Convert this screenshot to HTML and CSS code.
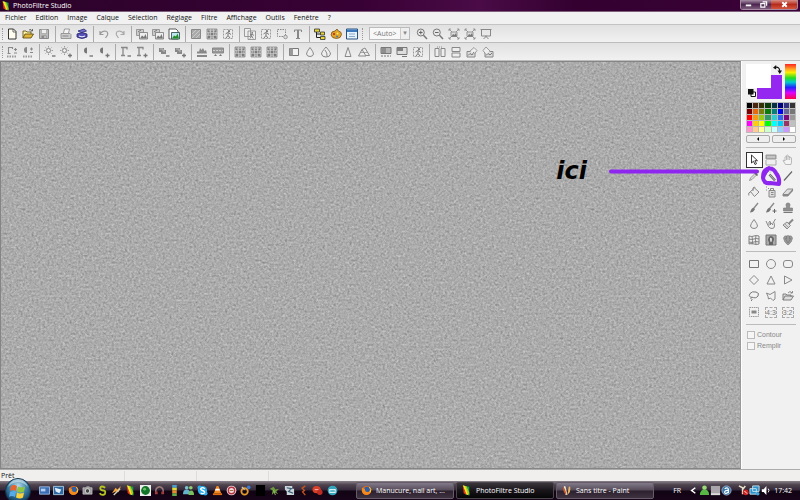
FILE: index.html
```html
<!DOCTYPE html>
<html lang="fr">
<head>
  <meta charset="UTF-8">
  <meta name="viewport" content="width=device-width, initial-scale=1.0">
  <title>PhotoFiltre Studio</title>
  <link rel="stylesheet" href="styles.css">
</head>
<body>

<!-- Icon set -->
<svg class="sprite" aria-hidden="true">
  <defs>
    <radialGradient id="orb" cx=".5" cy=".3" r=".7">
      <stop offset="0" stop-color="#b9dcec"/><stop offset=".5" stop-color="#3d83a9"/><stop offset="1" stop-color="#0a2e4c"/>
    </radialGradient>
    <filter id="grain" x="0" y="0" width="100%" height="100%" color-interpolation-filters="sRGB">
      <feTurbulence type="fractalNoise" baseFrequency=".45" numOctaves="2" seed="4"/>
      <feColorMatrix type="matrix" values=".16 .16 .16 0 .43  .16 .16 .16 0 .43  .16 .16 .16 0 .43  0 0 0 0 1"/>
    </filter>
  </defs>
  <symbol id="new" viewBox="0 0 12 12"><path d="M2.5 1h5l2.500 2.500V11h-7.500z" fill="#fffdf0" stroke="#333"/><path d="M7 1v3h3" fill="none" stroke="#333" stroke-width=".7"/></symbol>
  <symbol id="open" viewBox="0 0 12 12"><path d="M1 10V3h3l1 1h4v2" fill="#fff3a0" stroke="#54430a" stroke-width=".8"/><path d="M1 10l2-4h8.500L9 10z" fill="#e0b63a" stroke="#54430a" stroke-width=".8"/><path d="M7 2q2-1.500 3 .8M10.500 1v2h-2" fill="none" stroke="#333" stroke-width=".7"/></symbol>
  <symbol id="save" viewBox="0 0 12 12"><path d="M1.500 1.500h9v9h-9z" fill="#bbb" stroke="#888"/><path d="M3.500 1.500h5v4h-5z" fill="#eee" stroke="#999" stroke-width=".6"/><path d="M3.500 7.500h5v3h-5z" fill="#888"/><path d="M6.500 8h1v2h-1z" fill="#eee"/></symbol>
  <symbol id="print" viewBox="0 0 12 12"><path d="M3.500 5l1-4h5l-1 4" fill="#f4f4f4" stroke="#888" stroke-width=".8"/><path d="M1 5.500h9l1 1v4H1z" fill="#ccc" stroke="#888" stroke-width=".8"/><path d="M2.500 8h6" stroke="#888"/></symbol>
  <symbol id="scan" viewBox="0 0 12 12"><path d="M2 3l6-2 2.500 2-5 1.500z" fill="#7773cc" stroke="#262678" stroke-width=".8"/><path d="M1 6q5-3 10 0v3q-5 3-10 0z" fill="#5551b6" stroke="#24246c" stroke-width=".8"/><path d="M3 8q3 1.500 6 0" fill="none" stroke="#eef" stroke-width="1.200"/></symbol>
  <symbol id="undo" viewBox="0 0 12 12"><path d="M2 3v3.500h3.500M2 6q2-3 5-3 3.500.5 2.500 4L7.500 10" fill="none" stroke="#999" stroke-width="1.200"/></symbol>
  <symbol id="redo" viewBox="0 0 12 12"><path d="M10 3v3.500H6.500M10 6Q8 3 5 3 1.500 3.500 2.500 7L4.500 10" fill="none" stroke="#aaa" stroke-width="1.200"/></symbol>
  <symbol id="pics" viewBox="0 0 12 12"><path d="M.5 1.500h7v6h-7z" fill="#ccc" stroke="#888" stroke-width=".8"/><path d="M3.500 4.500h8v6.500h-8z" fill="#eee" stroke="#777" stroke-width=".8"/><path d="M4 10.500l2-3 2 1.500 1.500-3 1.500 4.500z" fill="#777"/><path d="M2 4l3-2" stroke="#777"/></symbol>
  <symbol id="picgreen" viewBox="0 0 12 12"><path d="M1 1h7l2 2v8H1z" fill="#fff" stroke="#333" stroke-width=".8"/><path d="M3.500 4.500h8v6.500h-8z" fill="#bfe6ee" stroke="#244" stroke-width=".8"/><path d="M4 10.500l2-3 2 1 1.500-3 1.500 5z" fill="#248a24"/></symbol>
  <symbol id="pattern" viewBox="0 0 12 12"><path d="M1.500 1.500h9v9h-9z" fill="#aaa" stroke="#888"/><path d="M2 10L10 2M2 6l4-4M6 10l4-4" stroke="#c8c8c8"/></symbol>
  <symbol id="grid" viewBox="0 0 12 12"><path d="M1 1h10v10H1z" fill="#b0b0b0" stroke="#888" stroke-width=".8"/><path d="M2 2l2.500 2.500L6 2.500l1.500 2L10 2v3L8 6l2 2v2H8L6 7.500 4 10H2V7.500L4 6 2 4z" fill="#7c7c7c"/><path d="M4.500 1v10M7.500 1v10M1 4.500h10M1 7.500h10" stroke="#d5d5d5" stroke-width=".6"/></symbol>
  <symbol id="runner" viewBox="0 0 12 12"><path d="M1.500 1.500h9v9h-9z" fill="#ededed" stroke="#888" stroke-width=".8" stroke-dasharray="2 1"/><circle cx="7" cy="3.200" r="1.100" fill="#777"/><path d="M3.500 6l2-1.500 1.500.5 2 1.500M6 5v2.500L4 10M6 7.500L8 10" fill="none" stroke="#777"/></symbol>
  <symbol id="copyrun" viewBox="0 0 12 12"><path d="M.5.500h6v8h-6zM4 3h7.500v8.500H4z" fill="#eee" stroke="#888" stroke-width=".8"/><circle cx="8.200" cy="4.800" r=".9" fill="#777"/><path d="M6 7l2-1 2 1.500M7.700 6v2L6 10.500M7.700 8l1.500 2.500" fill="none" stroke="#777" stroke-width=".9"/></symbol>
  <symbol id="select" viewBox="0 0 12 12"><path d="M1.500 1.500h8v7h-8z" fill="none" stroke="#888" stroke-dasharray="1.500 1"/><circle cx="9.500" cy="9" r="1.800" fill="#ddd" stroke="#888" stroke-width=".8"/></symbol>
  <symbol id="type" viewBox="0 0 12 12"><path d="M2.500 4V2h7v2M4 10.500h4" fill="none" stroke="#888"/><path d="M6 2v8" stroke="#888" stroke-width="2"/></symbol>
  <symbol id="tree" viewBox="0 0 12 12"><path d="M2.500 3v6.500H7M2.500 6H7" fill="none" stroke="#222"/><path d="M.5 1h5v3h-5zM6.500 4h4v3h-4zM6.500 8.500h4.500v3H6.500z" fill="#e7d62e" stroke="#333" stroke-width=".8"/></symbol>
  <symbol id="palette" viewBox="0 0 12 12"><path d="M1 7q0-4 4-4l2-2 1.500 2q3 .5 3 3.500-.5 4-5 4-4.500 0-5.500-3.500z" fill="#e0a22c" stroke="#6d470b" stroke-width=".7"/><circle cx="4" cy="6" r="1" fill="#b22"/><circle cx="7.500" cy="5.500" r="1" fill="#fe5"/><circle cx="7" cy="8.500" r=".9" fill="#47a"/></symbol>
  <symbol id="window" viewBox="0 0 12 12"><path d="M.5 1h11v10H.5z" fill="#e8f2fb" stroke="#285080"/><path d="M1 1.500h10v2.500H1z" fill="#3b78bd"/><path d="M3 6h6M3 8.500h6" stroke="#86aacb"/></symbol>
  <symbol id="zoomin" viewBox="0 0 12 12"><circle cx="4.800" cy="4.500" r="3.500" fill="none" stroke="#777"/><path d="M7.500 7.300l3.500 3.700" stroke="#777" stroke-width="1.500"/><path d="M3 4.500h3.600M4.800 2.700v3.600" stroke="#666"/></symbol>
  <symbol id="zoomout" viewBox="0 0 12 12"><circle cx="4.800" cy="4.500" r="3.500" fill="none" stroke="#777"/><path d="M7.500 7.300l3.500 3.700" stroke="#777" stroke-width="1.500"/><path d="M3 4.500h3.600" stroke="#666"/></symbol>
  <symbol id="fit" viewBox="0 0 12 12"><path d="M3 4h6v4.500H3z" fill="#ddd" stroke="#999"/><path d="M3.500 8.500L5 6l1.500 1L8 5l1 3.500z" fill="#777"/><path d="M1 1l3 3M11 1L8 4M1 11l3-3M11 11L8 8M1 3V1h2M11 3V1H9M1 9v2h2M11 9v2H9" fill="none" stroke="#888" stroke-width=".8"/></symbol>
  <symbol id="screen" viewBox="0 0 12 12"><path d="M.5 1.500h11M1.500 2v6h9V2M6 7.500V9M3.500 11L6 8.500 8.500 11" fill="none" stroke="#888"/></symbol>
  <symbol id="autolevel" viewBox="0 0 12 12"><path d="M2.500 7.500V1.500h4v1.500M1.500 7.500h3M8 3.500h3M9.500 2v3M8 7h3" fill="none" stroke="#888" stroke-width="1.100"/><path d="M1 10.500h10" stroke="#999" stroke-width="2" stroke-dasharray="1.500 1"/></symbol>
  <symbol id="autocontrast" viewBox="0 0 12 12"><path d="M5 1v6a3 3 0 010-6z" fill="#888"/><path d="M8 3h3M9.500 1.500v3M8 6.500h3" fill="none" stroke="#888"/><path d="M1 10.500h10" stroke="#999" stroke-width="2" stroke-dasharray="1.500 1"/></symbol>
  <symbol id="sun" viewBox="0 0 12 12"><circle cx="4.500" cy="4.500" r="2" fill="#eee" stroke="#888"/><path d="M4.500 0v1.500M4.500 7.500V9M0 4.500h1.500M7.500 4.500H9M1.500 1.500l1 1M6.500 6.500l1 1M7.500 1.500l-1 1M1.500 7.500l1-1" stroke="#888" stroke-width=".8"/></symbol>
  <symbol id="sunless" viewBox="0 0 12 12"><use href="#sun" width="12" height="12"/><path d="M8 10h3.500" stroke="#777" stroke-width="1.400"/></symbol>
  <symbol id="sunmore" viewBox="0 0 12 12"><use href="#sun" width="12" height="12"/><path d="M8 9.500h4M10 7.500v4" stroke="#777" stroke-width="1.300"/></symbol>
  <symbol id="conless" viewBox="0 0 12 12"><path d="M5 1.500v6a3 3 0 010-6z" fill="#777"/><path d="M7.500 10H11" stroke="#777" stroke-width="1.400"/></symbol>
  <symbol id="conmore" viewBox="0 0 12 12"><path d="M5 1.500v6a3 3 0 010-6z" fill="#777"/><path d="M7.500 9.500h4M9.500 7.500v4" stroke="#777" stroke-width="1.300"/></symbol>
  <symbol id="gamless" viewBox="0 0 12 12"><path d="M1 9.500h4M3 9.500V2M1 1.500h6v2" fill="none" stroke="#888" stroke-width="1.300"/><path d="M7.500 10H11" stroke="#777" stroke-width="1.400"/></symbol>
  <symbol id="gammore" viewBox="0 0 12 12"><path d="M1 9.500h4M3 9.500V2M1 1.500h6v2" fill="none" stroke="#888" stroke-width="1.300"/><path d="M7.500 9.500h4M9.500 7.500v4" stroke="#777" stroke-width="1.300"/></symbol>
  <symbol id="satless" viewBox="0 0 12 12"><path d="M1 2h5v2h2v4H3V6H1z" fill="#888"/><path d="M2 3h3v2h2" stroke="#bbb" fill="none"/><path d="M8 10h3.500" stroke="#777" stroke-width="1.400"/></symbol>
  <symbol id="satmore" viewBox="0 0 12 12"><path d="M1 2h5v2h2v4H3V6H1z" fill="#888"/><path d="M2 3h3v2h2" stroke="#bbb" fill="none"/><path d="M8 9.500h4M10 7.500v4" stroke="#777" stroke-width="1.300"/></symbol>
  <symbol id="histo" viewBox="0 0 12 12"><path d="M1 7.500V6l1-1 1 1 1-4 1.500 2L7 2l1.500 3L10 4l1 3.500z" fill="#888"/><path d="M1 10h10" stroke="#888" stroke-width="2"/></symbol>
  <symbol id="levels" viewBox="0 0 12 12"><path d="M.5 2h11v5H.5z" fill="#999" stroke="#888"/><path d="M1 4.500h10" stroke="#ccc" stroke-dasharray="2 1"/><path d="M2 10l1.500-2L5 10zM7 10l1.500-2 1.500 2z" fill="#777"/></symbol>
  <symbol id="contrast" viewBox="0 0 12 12"><path d="M1.500 2.500h9v7h-9z" fill="#f2f2f2" stroke="#777"/><path d="M1.500 2.500H5v7H1.500z" fill="#999"/></symbol>
  <symbol id="drop" viewBox="0 0 12 12"><path d="M6 1.500Q2.500 6 2.500 8q.5 2.500 3.500 2.500T9.500 8Q9.500 6 6 1.500z" fill="#eee" stroke="#888"/></symbol>
  <symbol id="drops" viewBox="0 0 12 12"><path d="M6 1Q1.500 6 1.500 8q.5 3 4.500 3t4.500-3Q10.500 6 6 1z" fill="#eee" stroke="#888"/><path d="M5 4Q7.500 7 7 10.500" fill="none" stroke="#888"/></symbol>
  <symbol id="cone" viewBox="0 0 12 12"><path d="M6 1.500L3 10.500h6z" fill="#eee" stroke="#888"/></symbol>
  <symbol id="hills" viewBox="0 0 12 12"><path d="M.5 10L4 3.500 8 10zM4 3.500L7 2l4.500 7.500H8" fill="#eee" stroke="#888"/><path d="M2.500 6.500h7" stroke="#888" stroke-width=".7"/></symbol>
  <symbol id="grad" viewBox="0 0 12 12"><path d="M1 1.500h10v6H1z" fill="#b5b5b5" stroke="#777"/><path d="M1 2h5v5H1z" fill="#8e8e8e"/><path d="M1 10h10" stroke="#777" stroke-dasharray="2 1"/></symbol>
  <symbol id="gradtwo" viewBox="0 0 12 12"><path d="M1 1.500h10v7H1z" fill="#ddd" stroke="#777"/><path d="M1 2h6v3H1z" fill="#808080"/><path d="M6 10.500h5" stroke="#777"/></symbol>
  <symbol id="mirror" viewBox="0 0 12 12"><path d="M1 2.500h4v8H1zM7 2.500h4v8H7z" fill="#eee" stroke="#888"/><path d="M3 1h6" stroke="#888" stroke-dasharray="1 1"/></symbol>
  <symbol id="flip" viewBox="0 0 12 12"><path d="M2 1.500h8v4H2zM2 7h8v4H2z" fill="#eee" stroke="#888"/></symbol>
  <symbol id="rotate" viewBox="0 0 12 12"><path d="M1 5.500h8v5.500H1z" fill="#ddd" stroke="#888"/><path d="M4 5L8 1.500l3 3-3 4" fill="#eee" stroke="#888" stroke-width=".8"/><path d="M2 9.500l2-2 2 1.500 2-3" fill="none" stroke="#777"/></symbol>
  <symbol id="rotateright" viewBox="0 0 12 12"><path d="M3 5.500h8v5.500H3z" fill="#ddd" stroke="#888"/><path d="M8 5L4 1l-3 3.500 3 4" fill="#eee" stroke="#888" stroke-width=".8"/><path d="M4 9.500l2-2 2 1.500 2-2" fill="none" stroke="#777"/></symbol>

  <symbol id="arrow" viewBox="0 0 12 12"><path d="M3.500 1v8l2-1.800L7 10.500l1.500-.8-1.600-3H9.500z" fill="#fff" stroke="#222" stroke-width=".9"/></symbol>
  <symbol id="layers" viewBox="0 0 12 12"><path d="M1 1h10v4H1z" fill="#a9a9a9" stroke="#999"/><path d="M2 3h8" stroke="#ddd"/><path d="M1 6v5h10V6" fill="#eee" stroke="#aaa"/></symbol>
  <symbol id="hand" viewBox="0 0 12 12"><path d="M3.500 10.500L1 6.500q1-1 2 .5V3q1-1 1.500 0V1.500q1-1 1.500 0v1q1-1 1.500 0v1q1.500-.8 2 .5v4L9 10.500zM4.500 3v3M6 2v4M7.700 3v3" fill="#f4f4f4" stroke="#aaa" stroke-width=".8"/></symbol>
  <symbol id="pipette" viewBox="0 0 12 12"><path d="M1.500 10.500l1-2.500L7 3.500 8.500 5 4 9.500z" fill="#ddd" stroke="#888" stroke-width=".8"/><path d="M6.500 2.500l3 3M8 3.500L10.500 1" stroke="#666" stroke-width="1.700"/></symbol>
  <symbol id="wand" viewBox="0 0 12 12"><path d="M4.500 4.500l5.500 6" stroke="#666" stroke-width="2.500"/><path d="M5 5l5 5.500" stroke="#ddd" stroke-width=".7"/><path d="M3.500 0v2M0 4h2M1 1l1.500 1.500M6 1.500L5 2.500" stroke="#888" stroke-width=".8"/></symbol>
  <symbol id="line" viewBox="0 0 12 12"><path d="M2 10.500l8-9" stroke="#666" stroke-width="1.200"/></symbol>
  <symbol id="bucket" viewBox="0 0 12 12"><path d="M2.500 5.500l4-3.500L11 6l-4.500 4.500z" fill="#eee" stroke="#888"/><path d="M5 5V2q1-2 2.500 0M3 5.500L.8 7v2.500" fill="none" stroke="#888"/></symbol>
  <symbol id="spray" viewBox="0 0 12 12"><path d="M4 4.500h6V11H4z" fill="#ddd" stroke="#888"/><path d="M5.500 4V2.500h3V4M6 6.500h2.500M6 8.500h2.500" fill="none" stroke="#888"/><path d="M1 1h1M3 2.500h1M1 4h1" stroke="#888"/></symbol>
  <symbol id="eraser" viewBox="0 0 12 12"><path d="M1 8l4.500-5H11L7 8.500 6 10H1z" fill="#ddd" stroke="#777" stroke-width=".8"/><path d="M1 8h5L11 3v2L6 10H1z" fill="#888"/></symbol>
  <symbol id="brush" viewBox="0 0 12 12"><path d="M6 6l4-5" stroke="#888" stroke-width="1.300"/><path d="M2 10.500Q3 6.500 5.500 5.500L7 7q-1.500 3.500-5 3.500z" fill="#777"/></symbol>
  <symbol id="brushplus" viewBox="0 0 12 12"><path d="M5 6l4-5" stroke="#888" stroke-width="1.300"/><path d="M1 10.500q1-4 3.500-5L6 7q-1.500 3.500-5 3.500z" fill="#777"/><path d="M7.500 9h4M9.500 7v4" stroke="#666"/></symbol>
  <symbol id="stamp" viewBox="0 0 12 12"><path d="M4.500 5q-1.500-4 1.500-4t1.500 4v1h3v3h-9V6h3z" fill="#909090" stroke="#777" stroke-width=".6"/><path d="M1.500 10.500h9" stroke="#777"/></symbol>
  <symbol id="smudge" viewBox="0 0 12 12"><path d="M1 3l2.500 5.500q1 2 3.500 2T9.500 8L9 4.500M4 7.500V4q1-1.500 1.500 0v3M6 6q.5-2 1.500 0v1M8 5l2.500-4" fill="none" stroke="#888"/></symbol>
  <symbol id="artbrush" viewBox="0 0 12 12"><path d="M6.500 6l4.500-4.500" stroke="#888" stroke-width="2"/><path d="M1 7l4-3 3.500 3.500L5 11z" fill="#ddd" stroke="#777" stroke-width=".8"/><path d="M3 6l3.500 3.500M2 8l2.500 1.500" stroke="#888" stroke-width=".7"/></symbol>
  <symbol id="mesh" viewBox="0 0 12 12"><path d="M1 2q3 1 5 0t5 0v8q-3 1-5 0t-5 0zM1 5q3 1 5 0t5 0M1 8q3 1 5 0t5 0M4 2.500q1 4 0 8M8 1.500q-1 4 0 9" fill="#eee" stroke="#777" stroke-width=".9"/></symbol>
  <symbol id="portrait" viewBox="0 0 12 12"><path d="M1 1h10v10H1z" fill="#aaa" stroke="#777"/><path d="M4 11V8Q2 6 4 3q2-2 4 0t0 5v3z" fill="#666"/><path d="M5 4q2-1 2 1.500T6 8 5 6z" fill="#ddd"/></symbol>
  <symbol id="nozzle" viewBox="0 0 12 12"><path d="M1.500 4q1-3 3-2 1.500-1 3 0 2-1 3 2-.5 4.500-4.500 7-4-2.500-4.500-7z" fill="#999" stroke="#888" stroke-width=".7"/><path d="M3 4l3 5 3-5M4.500 2v3M7.500 2v3" fill="none" stroke="#777" stroke-width=".7"/></symbol>
  <symbol id="s-rect" viewBox="0 0 12 12"><path d="M1.500 2.500h9v7h-9z" fill="none" stroke="#777"/></symbol>
  <symbol id="s-circle" viewBox="0 0 12 12"><circle cx="6" cy="6" r="4.500" fill="none" stroke="#888"/></symbol>
  <symbol id="s-round" viewBox="0 0 12 12"><rect x="1.500" y="2.500" width="9" height="7" rx="2.500" fill="none" stroke="#888"/></symbol>
  <symbol id="s-diamond" viewBox="0 0 12 12"><path d="M6 1.500L10.500 6 6 10.500 1.500 6z" fill="none" stroke="#888"/></symbol>
  <symbol id="s-tri" viewBox="0 0 12 12"><path d="M6 2l4 8H2z" fill="none" stroke="#888"/></symbol>
  <symbol id="s-play" viewBox="0 0 12 12"><path d="M2.500 2L10 6l-7.500 4z" fill="none" stroke="#888"/></symbol>
  <symbol id="s-lasso" viewBox="0 0 12 12"><path d="M3 7.500Q0 6 2 3.500t6-1.500q4 1 2 4T3.500 7q-1.500 1.500 0 2t-.5 2" fill="none" stroke="#777"/></symbol>
  <symbol id="s-poly" viewBox="0 0 12 12"><path d="M1.500 3l3.500 1.500 5-3V9L8 10.500 5.500 8l-2 1L3 6.500z" fill="none" stroke="#888"/></symbol>
  <symbol id="s-open" viewBox="0 0 12 12"><path d="M1 10V4h3l1 1h4v2M1 10l2-4h8.500L9 10z" fill="#ddd" stroke="#777" stroke-width=".9"/><path d="M6 3q2-3 4 0M10.500 1v2h-2" fill="none" stroke="#777" stroke-width=".8"/></symbol>
  <symbol id="s-frame" viewBox="0 0 12 12"><path d="M1.500 1.500h9v9h-9z" fill="none" stroke="#999" stroke-dasharray="1.500 .7"/><path d="M3.500 4.500h5v3h-5z" fill="#888"/></symbol>
  <symbol id="bird" viewBox="0 0 12 12"><path d="M2 .5l7 1.500v9.500L5 10z" fill="#1e9d44"/><path d="M2 .5l4 .8 3 7v3z" fill="#9ad02c"/><path d="M2 .5l2.500.5L8 11l-3-1z" fill="#ffe12a"/><path d="M2 .5L6 10.300 3 9z" fill="#e8381c"/></symbol>
  <symbol id="fox" viewBox="0 0 12 12"><circle cx="6" cy="6" r="5" fill="#e76a14"/><circle cx="6.500" cy="5" r="3.200" fill="#2d5fa8"/><path d="M1 3l3 1 1 3 3 1 3-3q0 5-5 6Q0 10 1 3z" fill="#f28a1d"/><path d="M9 2q3 3 1 6" stroke="#ffd344" fill="none"/></symbol>
  <symbol id="paint" viewBox="0 0 12 12"><path d="M3 1.500q1-1 2 0L7 11H5z" fill="#eee2c8"/><path d="M2 2q3 2 4 9Q2 8 2 2z" fill="#cc5a2d"/><path d="M10 1.500Q11 8 7 10.500L8.500 2z" fill="#e9b565"/></symbol>
</svg>

<header class="titlebar">
  <svg class="icon"><use href="#bird"/></svg>
  <span class="caption">PhotoFiltre Studio</span>
  <div class="window-buttons">
    <button aria-label="Réduire"><svg viewBox="0 0 10 10"><path d="M2 5h6v2H2z" fill="#fff"/></svg></button>
    <button aria-label="Restaurer"><svg viewBox="0 0 10 10"><path d="M4 2h4.500v4.500M2 4h4.500v4H2z" fill="none" stroke="#fff" stroke-width="1.300"/></svg></button>
    <button class="close" aria-label="Fermer"><svg viewBox="0 0 10 10"><path d="M2.500 2.500l5 5M7.500 2.500l-5 5" stroke="#fff" stroke-width="2"/></svg></button>
  </div>
</header>

<nav class="menubar">
  <button>Fichier</button>
  <button>Edition</button>
  <button>Image</button>
  <button>Calque</button>
  <button>Sélection</button>
  <button>Réglage</button>
  <button>Filtre</button>
  <button>Affichage</button>
  <button>Outils</button>
  <button>Fenêtre</button>
  <button>?</button>
</nav>

<div class="toolbar">
  <div class="grip"></div>
  <div class="group">
    <button aria-label="Nouveau"><svg><use href="#new"/></svg></button>
    <button aria-label="Ouvrir"><svg><use href="#open"/></svg></button>
    <button aria-label="Enregistrer"><svg><use href="#save"/></svg></button>
  </div>
  <div class="group">
    <button aria-label="Imprimer"><svg><use href="#print"/></svg></button>
    <button aria-label="Numériser"><svg><use href="#scan"/></svg></button>
  </div>
  <div class="group">
    <button aria-label="Annuler"><svg><use href="#undo"/></svg></button>
    <button aria-label="Rétablir"><svg><use href="#redo"/></svg></button>
  </div>
  <div class="group">
    <button aria-label="Taille de l'image"><svg><use href="#pics"/></svg></button>
    <button aria-label="Taille de la zone"><svg><use href="#pics"/></svg></button>
    <button aria-label="Explorateur"><svg><use href="#picgreen"/></svg></button>
  </div>
  <div class="group">
    <button aria-label="Motif"><svg><use href="#pattern"/></svg></button>
    <button aria-label="Mosaïque"><svg><use href="#grid"/></svg></button>
    <button aria-label="Découpe"><svg><use href="#runner"/></svg></button>
  </div>
  <div class="group">
    <button aria-label="Dupliquer"><svg><use href="#copyrun"/></svg></button>
    <button aria-label="Fusionner"><svg><use href="#runner"/></svg></button>
    <button aria-label="Sélection"><svg><use href="#select"/></svg></button>
    <button aria-label="Texte"><svg><use href="#type"/></svg></button>
  </div>
  <div class="group last">
    <button aria-label="Calques"><svg><use href="#tree"/></svg></button>
    <button aria-label="Palette"><svg><use href="#palette"/></svg></button>
    <button aria-label="Fenêtre"><svg><use href="#window"/></svg></button>
  </div>
  <div class="grip"></div>
  <div class="zoom">
    <select aria-label="Zoom" disabled><option>&lt;Auto&gt;</option></select>
  </div>
  <div class="group last">
    <button aria-label="Zoom avant"><svg><use href="#zoomin"/></svg></button>
    <button aria-label="Zoom arrière"><svg><use href="#zoomout"/></svg></button>
    <button aria-label="Taille réelle"><svg><use href="#fit"/></svg></button>
    <button aria-label="Ajuster"><svg><use href="#fit"/></svg></button>
    <button aria-label="Plein écran"><svg><use href="#screen"/></svg></button>
  </div>
</div>

<div class="toolbar">
  <div class="grip"></div>
  <div class="group">
    <button aria-label="Niveaux automatiques"><svg><use href="#autolevel"/></svg></button>
    <button aria-label="Contraste automatique"><svg><use href="#autocontrast"/></svg></button>
  </div>
  <div class="group">
    <button aria-label="Luminosité -"><svg><use href="#sunless"/></svg></button>
    <button aria-label="Luminosité +"><svg><use href="#sunmore"/></svg></button>
  </div>
  <div class="group">
    <button aria-label="Contraste -"><svg><use href="#conless"/></svg></button>
    <button aria-label="Contraste +"><svg><use href="#conmore"/></svg></button>
  </div>
  <div class="group">
    <button aria-label="Gamma -"><svg><use href="#gamless"/></svg></button>
    <button aria-label="Gamma +"><svg><use href="#gammore"/></svg></button>
  </div>
  <div class="group">
    <button aria-label="Saturation -"><svg><use href="#satless"/></svg></button>
    <button aria-label="Saturation +"><svg><use href="#satmore"/></svg></button>
  </div>
  <div class="group">
    <button aria-label="Histogramme"><svg><use href="#histo"/></svg></button>
    <button aria-label="Teinte"><svg><use href="#levels"/></svg></button>
  </div>
  <div class="group">
    <button aria-label="Trame 1"><svg><use href="#grid"/></svg></button>
    <button aria-label="Trame 2"><svg><use href="#grid"/></svg></button>
    <button aria-label="Trame 3"><svg><use href="#grid"/></svg></button>
  </div>
  <div class="group">
    <button aria-label="Niveaux de gris"><svg><use href="#contrast"/></svg></button>
    <button aria-label="Flou"><svg><use href="#drop"/></svg></button>
    <button aria-label="Flou prononcé"><svg><use href="#drops"/></svg></button>
  </div>
  <div class="group">
    <button aria-label="Netteté"><svg><use href="#cone"/></svg></button>
    <button aria-label="Relief"><svg><use href="#hills"/></svg></button>
  </div>
  <div class="group">
    <button aria-label="Dégradé"><svg><use href="#grad"/></svg></button>
    <button aria-label="Dégradé bicolore"><svg><use href="#gradtwo"/></svg></button>
    <button aria-label="PhotoMasque"><svg><use href="#runner"/></svg></button>
  </div>
  <div class="group last">
    <button aria-label="Symétrie horizontale"><svg><use href="#mirror"/></svg></button>
    <button aria-label="Symétrie verticale"><svg><use href="#flip"/></svg></button>
    <button aria-label="Rotation gauche"><svg><use href="#rotate"/></svg></button>
    <button aria-label="Rotation droite"><svg><use href="#rotateright"/></svg></button>
  </div>
</div>

<main class="workspace">
  <div class="canvas">
    <svg class="grain" width="100%" height="100%"><rect width="100%" height="100%" filter="url(#grain)"/></svg>
  </div>

  <aside class="panel">
    <div class="colors">
      <div class="current">
        <div class="front"></div>
        <div class="back"></div>
        <svg class="swap" viewBox="0 0 10 10"><path d="M3 2.500q4-.5 4.500 4" fill="none" stroke="#111" stroke-width="1.300"/><path d="M0 3l3.500-3v5zM5 6h5L7.500 10z" fill="#111"/></svg>
        <svg class="reset" viewBox="0 0 8 8"><path d="M3 3h4.500v4.500H3z" fill="#fff" stroke="#111"/><path d="M0 0h5.500v5.500H0z" fill="#111"/></svg>
      </div>
      <div class="spectrum"></div>
    </div>
    <div class="swatches">
      <i class="c01"></i><i class="c02"></i><i class="c03"></i><i class="c04"></i><i class="c05"></i><i class="c06"></i><i class="c07"></i><i class="c08"></i>
      <i class="c09"></i><i class="c10"></i><i class="c11"></i><i class="c12"></i><i class="c13"></i><i class="c14"></i><i class="c15"></i><i class="c16"></i>
      <i class="c17"></i><i class="c18"></i><i class="c19"></i><i class="c20"></i><i class="c21"></i><i class="c22"></i><i class="c23"></i><i class="c24"></i>
      <i class="c25"></i><i class="c26"></i><i class="c27"></i><i class="c28"></i><i class="c29"></i><i class="c30"></i><i class="c31"></i><i class="c32"></i>
      <i class="c33"></i><i class="c34"></i><i class="c35"></i><i class="c36"></i><i class="c37"></i><i class="c38"></i><i class="c39"></i><i class="c40"></i>
    </div>
    <div class="pager">
      <button aria-label="Palette précédente"><svg viewBox="0 0 6 6"><path d="M4 1v4L2 3z"/></svg></button>
      <button aria-label="Palette suivante"><svg viewBox="0 0 6 6"><path d="M2 1v4l2-2z"/></svg></button>
    </div>
    <div class="tools">
      <button class="active" aria-label="Sélection"><svg><use href="#arrow"/></svg></button>
      <button aria-label="Gestionnaire de calques"><svg><use href="#layers"/></svg></button>
      <button aria-label="Déplacement"><svg><use href="#hand"/></svg></button>
      <button aria-label="Pipette"><svg><use href="#pipette"/></svg></button>
      <button aria-label="Baguette magique"><svg><use href="#wand"/></svg></button>
      <button aria-label="Ligne"><svg><use href="#line"/></svg></button>
      <button aria-label="Remplissage"><svg><use href="#bucket"/></svg></button>
      <button aria-label="Aérographe"><svg><use href="#spray"/></svg></button>
      <button aria-label="Gomme"><svg><use href="#eraser"/></svg></button>
      <button aria-label="Pinceau"><svg><use href="#brush"/></svg></button>
      <button aria-label="Pinceau avancé"><svg><use href="#brushplus"/></svg></button>
      <button aria-label="Tampon"><svg><use href="#stamp"/></svg></button>
      <button aria-label="Flou"><svg><use href="#drop"/></svg></button>
      <button aria-label="Doigt"><svg><use href="#smudge"/></svg></button>
      <button aria-label="Pinceau artistique"><svg><use href="#artbrush"/></svg></button>
      <button aria-label="Déformation"><svg><use href="#mesh"/></svg></button>
      <button aria-label="Retouche"><svg><use href="#portrait"/></svg></button>
      <button aria-label="Tube à images"><svg><use href="#nozzle"/></svg></button>
    </div>
    <div class="tools shapes">
      <button aria-label="Rectangle"><svg><use href="#s-rect"/></svg></button>
      <button aria-label="Ellipse"><svg><use href="#s-circle"/></svg></button>
      <button aria-label="Rectangle arrondi"><svg><use href="#s-round"/></svg></button>
      <button aria-label="Losange"><svg><use href="#s-diamond"/></svg></button>
      <button aria-label="Triangle"><svg><use href="#s-tri"/></svg></button>
      <button aria-label="Triangle droit"><svg><use href="#s-play"/></svg></button>
      <button aria-label="Lasso"><svg><use href="#s-lasso"/></svg></button>
      <button aria-label="Polygone"><svg><use href="#s-poly"/></svg></button>
      <button aria-label="Charger une forme"><svg><use href="#s-open"/></svg></button>
      <button aria-label="Forme libre"><svg><use href="#s-frame"/></svg></button>
      <button><span class="ratio">4:3</span></button>
      <button><span class="ratio">3:2</span></button>
    </div>
    <div class="options">
      <label><input type="checkbox" disabled>Contour</label>
      <label><input type="checkbox" disabled>Remplir</label>
    </div>
  </aside>

  <!-- Purple pointer towards the magic wand -->
  <div class="note">
    <span>ici</span>
    <svg viewBox="0 0 175 26"><path d="M3 8.500h146" /><path d="M161 5q-5 5-6 10 1 6 7 5l9 1q1-6-3-11-3-6-9-4-4 2-4 8" /></svg>
  </div>
</main>

<footer class="statusbar">
  <span class="ready">Prêt</span><span class="cell"></span><span class="cell"></span>
</footer>

<div class="taskbar">
  <button class="start" aria-label="Démarrer">
    <svg viewBox="0 0 26 26"><circle cx="13" cy="13" r="12.500" fill="url(#orb)" stroke="#17344a"/><path d="M6 8q3-2 6 0l-1 5q-3-2-6 0z" fill="#e8642c"/><path d="M13 8.500q3 2 7 0l-1 5q-3 2-7 0z" fill="#8cc63e"/><path d="M5 14q3-2 6 0l-1 5q-3-2-6 0z" fill="#55aae8"/><path d="M12 14.500q3 2 7 0l-1 5q-3 2-7 0z" fill="#fbd23c"/><path d="M3 9q10-10 20 0-3-8-10-8T3 9z" fill="#fff" opacity=".45"/></svg>
  </button>
  <div class="quicklaunch">
    <a href="#" aria-label="Bureau"><svg viewBox="0 0 12 12"><path d="M.5 2h11v8H.5z" fill="#3c6cb4" stroke="#9bbce0"/><path d="M2 4h5v3H2z" fill="#b4d0ee"/></svg></a>
    <a href="#" aria-label="Fenêtres"><svg viewBox="0 0 12 12"><path d="M.5 1.500h11v9H.5z" fill="#2e69a4" stroke="#acd"/><path d="M2 3l7 2-2 4-4-2z" fill="#e4f0fa"/></svg></a>
    <a href="#" aria-label="Firefox"><svg><use href="#fox"/></svg></a>
    <a href="#" aria-label="Appareil photo"><svg viewBox="0 0 12 12"><path d="M1 3h3l1-1h3l1 1h2v7H1z" fill="#999" stroke="#ddd" stroke-width=".6"/><circle cx="6" cy="6.500" r="2.500" fill="#444" stroke="#ddd"/></svg></a>
    <a href="#" aria-label="Serpent"><svg viewBox="0 0 12 12"><path d="M9 3Q4 0 3.500 3.500 4 6 7 6t1.500 4Q5 12 3 9" fill="none" stroke="#b6c422" stroke-width="2"/></svg></a>
    <a href="#" aria-label="Winamp"><svg viewBox="0 0 12 12"><path d="M1 9l4-6 2 2 4-4-3 7-3-1z" fill="#f2a43a"/><path d="M3 11l7-7" stroke="#d3d3bb" stroke-width="1.500"/></svg></a>
    <a href="#" aria-label="PhotoFiltre"><svg><use href="#bird"/></svg></a>
    <a href="#" aria-label="Jeu"><svg viewBox="0 0 12 12"><path d="M0 0h12v12H0z" fill="#eee"/><circle cx="6" cy="6" r="4.800" fill="#127527"/><circle cx="5" cy="4.500" r="1.600" fill="#67bf68"/></svg></a>
    <a href="#" aria-label="Casque"><svg viewBox="0 0 12 12"><path d="M2 9Q1 3 6 2q5 1 4 7" fill="none" stroke="#9c7a7a" stroke-width="1.600"/><path d="M1 7h3v3H1zM8 7h3v3H8z" fill="#a23c3c"/></svg></a>
    <a href="#" aria-label="Couleurs"><svg viewBox="0 0 12 12"><path d="M3.500 0h5v3h-5z" fill="#4b9ed0"/><path d="M3.500 3h5v3h-5z" fill="#e5dd39"/><path d="M3.500 6h5v3h-5z" fill="#e9892d"/><path d="M3.500 9h5v3h-5z" fill="#64aa4c"/></svg></a>
    <a href="#" aria-label="Messenger"><svg viewBox="0 0 12 12"><circle cx="4" cy="3" r="2" fill="#7cc4d5"/><circle cx="8.500" cy="3" r="2" fill="#8ece6e"/><path d="M0 10q0-5 4-5t4 5z" fill="#66b4cb"/><path d="M6 11q0-5 3-5t3 5z" fill="#78c05f"/></svg></a>
    <a href="#" aria-label="Skype"><svg viewBox="0 0 12 12"><circle cx="6" cy="6" r="5" fill="#2cace8"/><circle cx="3" cy="3" r="2.500" fill="#2cace8"/><circle cx="9" cy="9" r="2.500" fill="#2cace8"/><path d="M8.500 4Q6 2 4.500 3.500T6 6t2 2.500-4 .5" fill="none" stroke="#fff" stroke-width="1.500"/></svg></a>
    <a href="#" aria-label="VLC"><svg viewBox="0 0 12 12"><path d="M5 1h2l3 8H2z" fill="#f08a20"/><path d="M4 4h4l.7 2H3.300z" fill="#fff"/><path d="M1 9h10v2H1z" fill="#dd6c13"/></svg></a>
    <a href="#" aria-label="Disque"><svg viewBox="0 0 12 12"><circle cx="6" cy="6" r="5.300" fill="#efdada"/><circle cx="6" cy="6" r="3.500" fill="none" stroke="#b53445" stroke-width="1.500"/><path d="M4 6h4" stroke="#963"/></svg></a>
    <a href="#" aria-label="Outils"><svg viewBox="0 0 12 12"><circle cx="5" cy="7" r="3.500" fill="none" stroke="#e2982b" stroke-width="2"/><path d="M2 2l3 3" stroke="#ccc" stroke-width="1.300"/><circle cx="9.500" cy="2.500" r="2" fill="#3b7dd0"/></svg></a>
    <a href="#" aria-label="Console"><svg viewBox="0 0 12 12"><path d="M1 0h10v12H1z" fill="#000"/></svg></a>
    <a href="#" aria-label="Plante"><svg viewBox="0 0 12 12"><path d="M1 4l4-2 2 3 4-1-3 3 2 3-4-2-3 3 1-5z" fill="#6b9b3c"/><path d="M5 6l2 5" stroke="#a7c57a"/></svg></a>
    <a href="#" aria-label="Images"><svg viewBox="0 0 12 12"><path d="M1 1h8v3h2v7H3V7L1 5z" fill="#c9d6dc"/><path d="M3 3l5 1-3 3 5 2" fill="none" stroke="#3e5d73" stroke-width="1.300"/></svg></a>
    <a href="#" aria-label="Flamme"><svg viewBox="0 0 12 12"><path d="M8 1L4.500 3.500 7 6 5 7.500 8 11" fill="none" stroke="#c15420" stroke-width="1.500"/></svg></a>
    <a href="#" aria-label="Bulles"><svg viewBox="0 0 12 12"><ellipse cx="5" cy="5" rx="4.500" ry="4" fill="#d8402a"/><circle cx="8.500" cy="8" r="3" fill="#bd2c22"/><path d="M3 5h4" stroke="#fbb"/></svg></a>
    <a href="#" aria-label="Globe"><svg viewBox="0 0 12 12"><circle cx="6" cy="6" r="5.300" fill="#36a6bd"/><path d="M3 7V5h6v2M2.500 8h7" fill="none" stroke="#d7f0f4" stroke-width="1.200"/></svg></a>
  </div>
  <div class="tasks">
    <button><svg><use href="#fox"/></svg>Manucure, nail art, ...</button>
    <button class="active"><svg><use href="#bird"/></svg>PhotoFiltre Studio</button>
    <button><svg><use href="#paint"/></svg>Sans titre - Paint</button>
  </div>
  <div class="tray">
    <span class="lang">FR</span>
    <svg viewBox="0 0 12 12"><path d="M8 3L4 6l4 3" fill="none" stroke="#fff" stroke-width="1.700"/></svg>
    <svg viewBox="0 0 12 12"><circle cx="6" cy="3" r="2.500" fill="#9bd97b"/><path d="M1 11q0-6 5-6t5 6z" fill="#58b845"/></svg>
    <svg viewBox="0 0 12 12"><path d="M1 1h10v10H1z" fill="#aaa5ab"/><path d="M1 9h10v2H1z" fill="#ddd"/></svg>
    <svg viewBox="0 0 12 12"><circle cx="6" cy="6" r="5" fill="#3a75a8" stroke="#9ac"/><path d="M4 4q4-2 4 1v4M8 6Q4 5.500 4 8t4 0" fill="none" stroke="#fff" stroke-width="1.300"/></svg>
    <svg class="spaced" viewBox="0 0 12 12"><path d="M1 1l4 2v7M8 1L5 5" fill="none" stroke="#e8dfc8" stroke-width="1.700"/><circle cx="8.500" cy="8" r="3.200" fill="#cb2222"/><path d="M7 6.500L10 9.500" stroke="#fff"/></svg>
    <svg viewBox="0 0 12 12"><path d="M4 1h7v6H4zM1 4h7v6H1z" fill="#2b93cb" stroke="#c9e4f2"/><circle cx="9.500" cy="9.500" r="2" fill="#42a8db"/></svg>
    <svg viewBox="0 0 12 12"><path d="M2 4.500h2L7 1v10L4 7.500H2z" fill="#fff"/><path d="M9 4q1.500 2 0 4" fill="none" stroke="#fff"/></svg>
    <time>17:42</time>
  </div>
</div>

</body>
</html>
```
FILE: styles.css
```css
* {
  box-sizing: border-box;
}

body {
  margin: 0;
  height: 100vh;
  display: flex;
  flex-direction: column;
  overflow: hidden;
  font-family: "Open Sans", "Noto Sans", sans-serif;
  font-size: 7px;
  line-height: 10px;
  color: #111;
  background: #f0f0f0;
}

button {
  font: inherit;
  color: inherit;
  margin: 0;
  padding: 0;
  border: none;
  background: none;
}

svg {
  display: block;
}

.sprite {
  position: absolute;
  width: 0;
  height: 0;
}

/* Title bar */
.titlebar {
  flex: none;
  height: 12px;
  display: flex;
  align-items: center;
  gap: 2px;
  padding: 0 2px 0 1px;
  color: #fff;
  background: linear-gradient(90deg, #2b0329 0%, #380135 45%, #4a0b46 60%, #330030 72%, #3b0238 100%);
  border-bottom: 1px solid #7d5f7b;
}

.titlebar .icon {
  width: 10px;
  height: 10px;
}

.window-buttons {
  display: flex;
  align-self: flex-start;
  margin-left: auto;
  border: 1px solid #a78ba5;
  border-top: none;
  border-radius: 0 0 3px 3px;
  overflow: hidden;
}

.window-buttons button {
  width: 15px;
  height: 9px;
  display: flex;
  align-items: center;
  justify-content: center;
  background: linear-gradient(#a58fa6, #4d2550 50%, #7b5b7c);
}

.window-buttons .close {
  width: 26px;
  background: linear-gradient(#d98f86, #b62c1c 50%, #d5553c);
}

.window-buttons svg {
  width: 9px;
  height: 9px;
}

/* Menu */
.menubar {
  flex: none;
  height: 13px;
  display: flex;
  align-items: center;
  gap: 9px;
  padding: 0 5px;
  background: #f1f1f1;
  border-bottom: 1px solid #c4c4c4;
}

/* Toolbars */
.toolbar {
  flex: none;
  height: 18px;
  display: flex;
  align-items: center;
  background: linear-gradient(#e1e1e1, #f1f1f1);
  border-bottom: 1px solid #bdbdbd;
}

.grip {
  width: 2px;
  height: 12px;
  margin-left: 2px;
  border-left: 1px dotted #999;
}

.group {
  display: flex;
  margin-right: 2px;
  padding-right: 3px;
  border-right: 1px solid #aaa;
}

.group.last {
  margin-right: 0;
  padding-right: 0;
  border-right: none;
}

.group button {
  width: 16px;
  height: 16px;
  display: flex;
  align-items: center;
  justify-content: center;
}

.group svg {
  width: 12px;
  height: 12px;
}

.zoom {
  position: relative;
  margin: 0 4px 0 5px;
}

.zoom select {
  width: 41px;
  height: 13px;
  padding: 0 3px;
  appearance: none;
  border: 1px solid #bbb;
  background: #f8f8f8;
  color: #777;
  opacity: 1;
  font: inherit;
}

.zoom::after {
  content: "▾";
  position: absolute;
  top: 1px;
  right: 1px;
  width: 8px;
  height: 11px;
  border-left: 1px solid #ccc;
  background: #eee;
  color: #888;
  text-align: center;
  font-family: "DejaVu Sans", sans-serif;
}

/* Work area */
.workspace {
  position: relative;
  flex: 1;
  min-height: 0;
  display: flex;
}

.canvas {
  position: relative;
  flex: 1;
  overflow: hidden;
  background: #ababab;
  border: 1px solid #858585;
  border-right-color: #999;
}

.grain {
  position: absolute;
  top: 0;
  left: 0;
}

.panel {
  flex: none;
  width: 59px;
  padding: 3px 4px 0 4px;
  background: #f1f1f1;
  border-left: 1px solid #fff;
}

.colors {
  display: flex;
  justify-content: space-between;
  height: 35px;
}

.current {
  position: relative;
  width: 36px;
}

.front,
.back {
  position: absolute;
  width: 25px;
  height: 24px;
}

.front {
  top: 0;
  left: 0;
  z-index: 1;
  background: #fff;
}

.back {
  right: 0;
  bottom: 0;
  background: #9528f0;
}

.swap {
  position: absolute;
  top: 1px;
  right: 0;
  width: 9px;
  height: 9px;
}

.reset {
  position: absolute;
  bottom: 2px;
  left: 2px;
  width: 8px;
  height: 8px;
}

.spectrum {
  width: 11px;
  background: linear-gradient(#f22, #fa2 15%, #fe0 24%, #2d2 40%, #0cc 52%, #22f 67%, #d0f 82%, #f04);
}

.swatches {
  display: grid;
  grid-template-columns: repeat(8, 1fr);
  grid-auto-rows: 5px;
  gap: 1px;
  margin-top: 3px;
  padding: 1px;
  background: #bbb;
}

.c01 { background: #000; }
.c02 { background: #4a2610; }
.c03 { background: #333305; }
.c04 { background: #0a3d0a; }
.c05 { background: #063344; }
.c06 { background: #00007c; }
.c07 { background: #333383; }
.c08 { background: #333; }
.c09 { background: #7c0000; }
.c10 { background: #e66a10; }
.c11 { background: #7d7d0a; }
.c12 { background: #0a7d0a; }
.c13 { background: #0a7d7d; }
.c14 { background: #0000f0; }
.c15 { background: #666699; }
.c16 { background: #777; }
.c17 { background: #f00; }
.c18 { background: #f99a10; }
.c19 { background: #99cc10; }
.c20 { background: #339966; }
.c21 { background: #33cccc; }
.c22 { background: #3366f0; }
.c23 { background: #7c0a7c; }
.c24 { background: #999; }
.c25 { background: #f0f; }
.c26 { background: #fc1; }
.c27 { background: #ff0; }
.c28 { background: #0f0; }
.c29 { background: #0ff; }
.c30 { background: #0cf; }
.c31 { background: #993366; }
.c32 { background: #c0c0c0; }
.c33 { background: #f9c; }
.c34 { background: #fc9; }
.c35 { background: #ff9; }
.c36 { background: #cfc; }
.c37 { background: #cff; }
.c38 { background: #9cf; }
.c39 { background: #c9f; }
.c40 { background: #fff; }

.pager {
  display: flex;
  gap: 2px;
  margin-top: 2px;
}

.pager button {
  flex: 1;
  height: 8px;
  display: flex;
  align-items: center;
  justify-content: center;
  background: #eee;
  border: 1px solid #aaa;
  border-radius: 2px;
}

.pager svg {
  width: 6px;
  height: 6px;
}

.tools {
  display: grid;
  grid-template-columns: repeat(3, 1fr);
  grid-auto-rows: 16px;
  margin-top: 4px;
  padding-top: 4px;
  border-top: 1px solid #bbb;
}

.tools button {
  display: flex;
  align-items: center;
  justify-content: center;
}

.tools svg {
  width: 12px;
  height: 12px;
}

.tools .active {
  background: #fff;
  border: 1px solid #333;
}

.shapes {
  margin-top: 3px;
}

.ratio {
  width: 12px;
  height: 11px;
  line-height: 9px;
  font-family: "Liberation Sans", Arial, sans-serif;
  text-align: center;
  border: 1px dashed #aaa;
  color: #777;
}

.options {
  margin-top: 4px;
  padding-top: 4px;
  border-top: 1px solid #bbb;
}

.options label {
  display: flex;
  align-items: center;
  gap: 2px;
  height: 11px;
  padding-left: 1px;
  color: #888;
  font-family: "Liberation Sans", Arial, sans-serif;
}

.options input {
  appearance: none;
  width: 8px;
  height: 8px;
  margin: 0;
  background: #f6f6f6;
  border: 1px solid #bbb;
}

/* Hand-drawn note, anchored to the tool panel */
.note {
  position: absolute;
  top: 102px;
  right: 17px;
  display: flex;
  gap: 21px;
  font: italic bold 24px/16px "DejaVu Sans", sans-serif;
  color: #000;
  pointer-events: none;
}

.note svg {
  width: 175px;
  height: 26px;
  fill: none;
  stroke: #8f26ef;
  stroke-width: 4;
  stroke-linecap: round;
  stroke-linejoin: round;
}

/* Status bar */
.statusbar {
  flex: none;
  height: 12px;
  display: flex;
  align-items: flex-end;
  background: #f0efee;
  border-top: 1px solid #aaa;
}

.ready {
  width: 125px;
  padding-left: 1px;
  border-right: 1px solid #ddd;
}

.cell {
  width: 72px;
  height: 10px;
  border-right: 1px solid #ddd;
}

/* Taskbar */
.taskbar {
  flex: none;
  height: 19px;
  display: flex;
  align-items: center;
  color: #fff;
  background: linear-gradient(#8b818a 0, #4d434d 20%, #34273a 48%, #100412 52%, #18041a 100%);
}

.start {
  position: relative;
  flex: none;
  width: 26px;
  height: 26px;
  margin: 0 8px 0 5px;
}

.quicklaunch {
  flex: 0 1 299px;
  display: flex;
  justify-content: space-between;
}

.quicklaunch svg,
.tray svg {
  width: 11px;
  height: 11px;
}

.tasks {
  flex: 0 1 298px;
  display: flex;
  gap: 2px;
  margin-left: 18px;
}

.tasks button {
  flex: 1;
  height: 17px;
  display: flex;
  align-items: center;
  gap: 4px;
  padding: 0 4px;
  white-space: nowrap;
  border: 1px solid #665c68;
  border-radius: 2px;
  background: linear-gradient(#82798a, #554b58 48%, #2c202e 52%, #3e3140);
}

.tasks .active {
  background: linear-gradient(#3a353b, #18151a 50%, #050405);
  border-color: #4b464c;
}

.tasks svg {
  width: 11px;
  height: 11px;
}

.tray {
  display: flex;
  align-items: center;
  margin-left: auto;
  padding-right: 8px;
}

.lang {
  margin-right: 7px;
}

.tray .spaced {
  margin-left: 6px;
}

.tray time {
  margin-left: 3px;
}
```
